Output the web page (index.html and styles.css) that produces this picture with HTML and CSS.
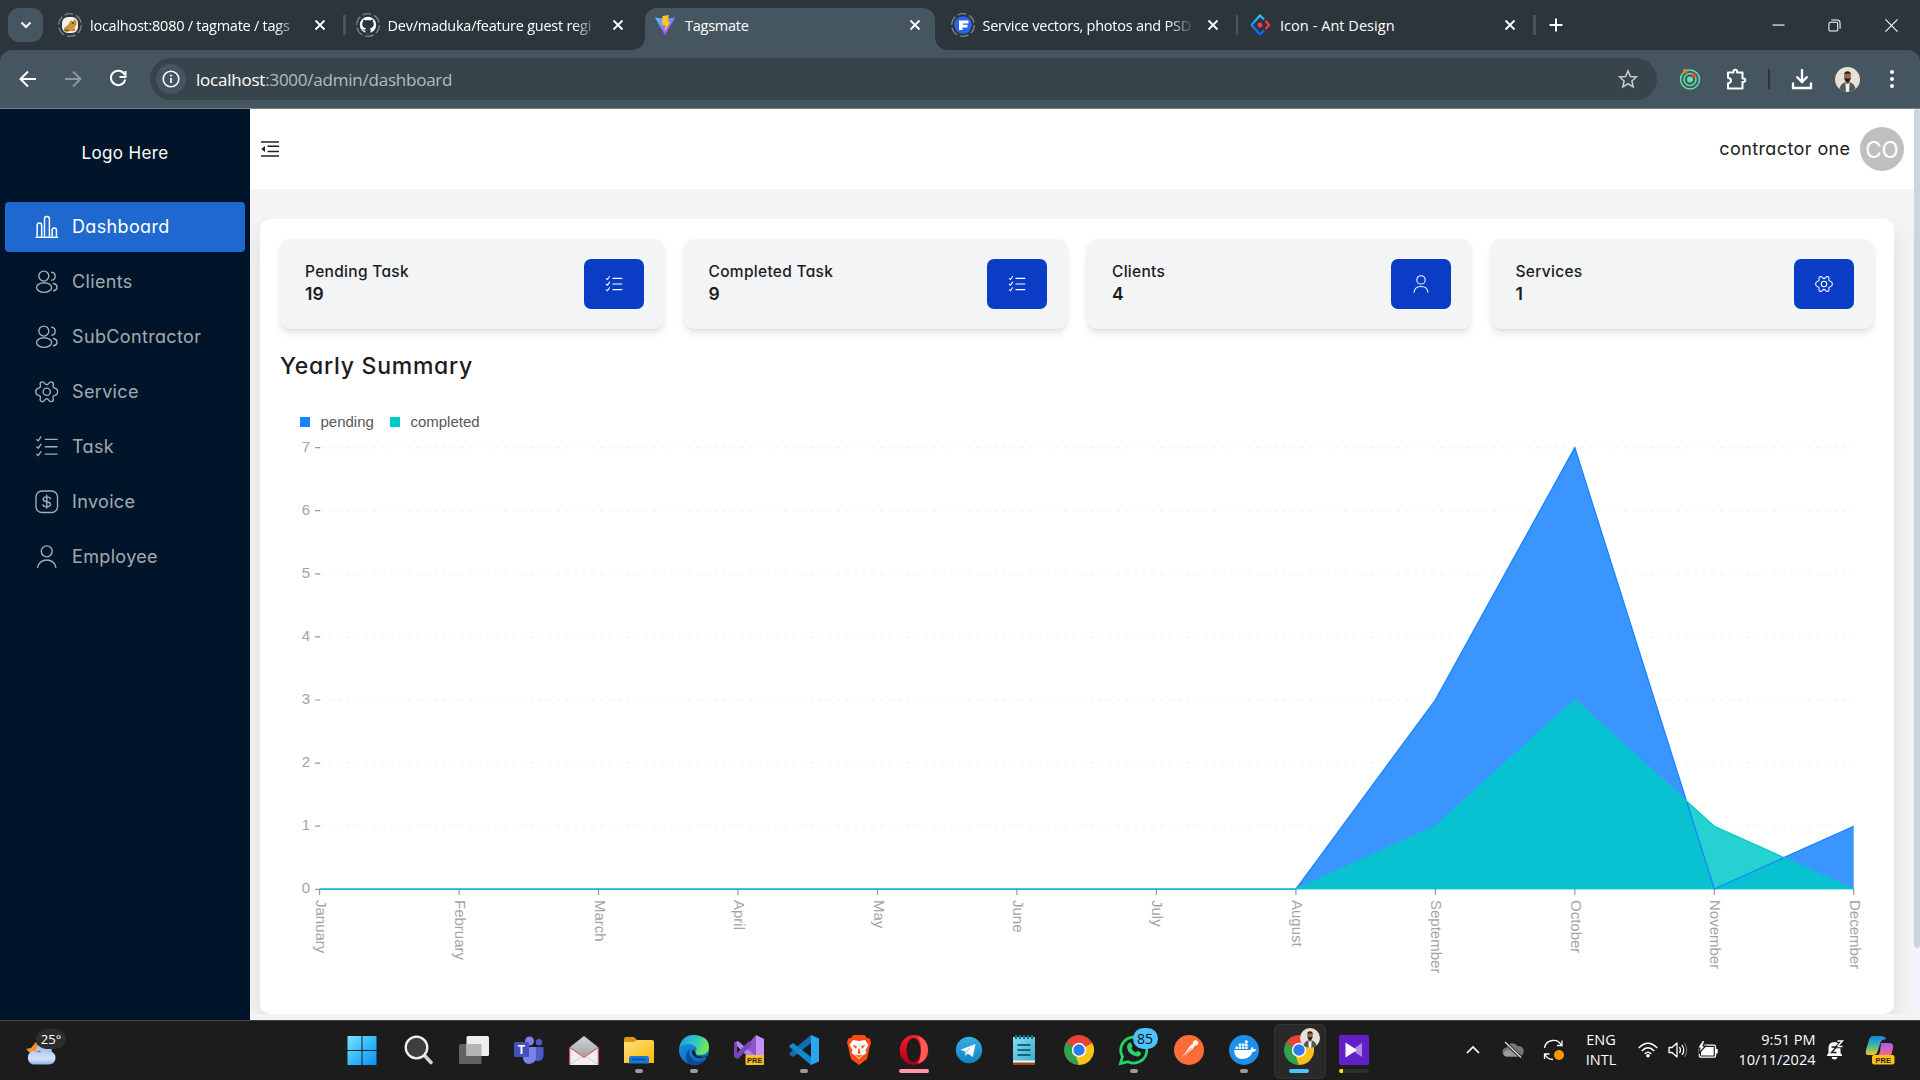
FILE: index.html
```html
<!DOCTYPE html>
<html lang="en">
<head>
<meta charset="utf-8">
<title>Tagsmate</title>
<link rel="stylesheet" href="styles.css">
</head>
<body>
<svg class="defs" aria-hidden="true">
  <defs>
    <linearGradient id="gWin" x1="0" y1="0" x2="1" y2="1"><stop offset="0" stop-color="#7fe0ff"/><stop offset=".5" stop-color="#35bdfb"/><stop offset="1" stop-color="#0a8cf5"/></linearGradient>
    <linearGradient id="gFolder" x1="0" y1="0" x2="1" y2="1"><stop offset="0" stop-color="#ffe07a"/><stop offset="1" stop-color="#fbb90c"/></linearGradient>
    <linearGradient id="gEdgeA" x1="0" y1="0" x2="1" y2=".3"><stop offset="0" stop-color="#1d9be0"/><stop offset=".55" stop-color="#2fc5c9"/><stop offset="1" stop-color="#6be85a"/></linearGradient>
    <linearGradient id="gEdgeB" x1="0" y1="0" x2=".6" y2="1"><stop offset="0" stop-color="#1b9de2"/><stop offset="1" stop-color="#0b62c4"/></linearGradient>
    <linearGradient id="gOpera" x1="0" y1="0" x2="0" y2="1"><stop offset="0" stop-color="#ff1b2d"/><stop offset="1" stop-color="#a70014"/></linearGradient>
    <linearGradient id="gTele" x1="0" y1="0" x2="0" y2="1"><stop offset="0" stop-color="#37aee2"/><stop offset="1" stop-color="#1283c1"/></linearGradient>
    <linearGradient id="gNote" x1="0" y1="0" x2="1" y2="1"><stop offset="0" stop-color="#8adcf0"/><stop offset="1" stop-color="#35aed0"/></linearGradient>
    <linearGradient id="gVite" x1="0" y1="0" x2=".6" y2="1"><stop offset="0" stop-color="#41d1ff"/><stop offset="1" stop-color="#bd34fe"/></linearGradient>
    <linearGradient id="gAnt" x1="0" y1="0" x2="0" y2="1"><stop offset="0" stop-color="#29cdff"/><stop offset=".5" stop-color="#148eff"/><stop offset="1" stop-color="#0a60ff"/></linearGradient>
    <linearGradient id="gCopA" x1="0" y1="0" x2="0" y2="1"><stop offset="0" stop-color="#1a7fe8"/><stop offset=".5" stop-color="#3fb9a0"/><stop offset="1" stop-color="#f2c62a"/></linearGradient>
    <linearGradient id="gCopB" x1="0" y1="0" x2="0" y2="1"><stop offset="0" stop-color="#a25cf0"/><stop offset="1" stop-color="#fb6a80"/></linearGradient>
    <linearGradient id="gCloud" x1="0" y1="0" x2="0" y2="1"><stop offset="0" stop-color="#b4cbf5"/><stop offset=".6" stop-color="#d3e1f8"/><stop offset="1" stop-color="#8fb0e8"/></linearGradient>
    <linearGradient id="gMail" x1="0" y1="0" x2="0" y2="1"><stop offset="0" stop-color="#d6d6d6"/><stop offset="1" stop-color="#8e8e8e"/></linearGradient>
    <clipPath id="cFace"><circle cx="12" cy="12" r="12"/></clipPath>
  </defs>
  <symbol id="x" viewBox="0 0 12 12"><path d="M1.500 1.500l9 9M10.500 1.500l-9 9" fill="none" stroke="#fff" stroke-width="1.800"/></symbol>
  <symbol id="ring" viewBox="0 0 24 24"><circle cx="12" cy="12" r="11.300" fill="none" stroke="#7b868c" stroke-width="1.300" stroke-dasharray="9 2.830"/></symbol>
  <symbol id="users" viewBox="0 0 24 24"><g fill="none" stroke="currentColor" stroke-width="1.400" stroke-linecap="round"><circle cx="9" cy="6.200" r="5.100"/><ellipse cx="9.300" cy="17.900" rx="7.700" ry="4.900"/><path d="M17 2.300c1.800.2 3.600 1.800 3.600 4s-1.800 3.800-3.600 4M18.800 13.800c2 .4 3.700 1.700 3.700 3.700s-1.500 3.200-3.500 3.700"/></g></symbol>
  <symbol id="gear" viewBox="0 0 24 24"><g fill="none" stroke="currentColor" stroke-width="1.400" stroke-linejoin="round"><circle cx="12" cy="12" r="3.700"/><path d="M9.900 3.500Q8.500 1.300 6.500 2.200Q4.700 3 5.400 5Q6.300 7.500 3.700 8.300Q.8 9 .8 12T3.700 15.700Q6.300 16.500 5.400 19Q4.700 21 6.500 21.800Q8.500 22.700 9.900 20.500Q12 17.800 14.100 20.500Q15.500 22.700 17.500 21.800Q19.300 21 18.600 19Q17.700 16.500 20.300 15.700Q23.200 15 23.200 12T20.300 8.300Q17.700 7.500 18.600 5Q19.300 3 17.500 2.200Q15.500 1.300 14.100 3.500Q12 6.200 9.900 3.500Z"/></g></symbol>
  <symbol id="task" viewBox="0 0 24 24"><g fill="none" stroke="currentColor" stroke-width="1.400" stroke-linecap="round"><path d="M10.500 4.500h12M10.500 12h12M10.500 19.500h12M1.800 4.800l1.500 1.200 2.700-4M1.800 12.300l1.500 1.200 2.700-4M1.800 19.800l1.500 1.200 2.700-4"/></g></symbol>
  <symbol id="user" viewBox="0 0 24 24"><g fill="none" stroke="currentColor" stroke-width="1.400" stroke-linecap="round"><circle cx="12" cy="6.500" r="5.600"/><path d="M2.700 23C4 12.800 20 12.800 21.300 23"/></g></symbol>
  <symbol id="chrome" viewBox="0 0 30 30"><path d="M15 15L2.010 7.500A15 15 0 0 1 27.990 7.500Z" fill="#ea4335"/><path d="M15 15L28 7.500A15 15 0 0 1 15 30Z" fill="#fbc116"/><path d="M15 15V30A15 15 0 0 1 2.010 7.500Z" fill="#34a04a"/><path d="M15 8H28.300L15 15ZM9 11.500L2.010 7.500 15 15Z" fill="#ea4335"/><path d="M21 18.500L15 30 12 22Z" fill="#fbc116"/><path d="M2.010 7.500L9 18.500 15 15Z" fill="#34a04a"/><circle cx="15" cy="15" r="7.200" fill="#fff"/><circle cx="15" cy="15" r="5.700" fill="#2f78ee"/></symbol>
  <symbol id="face" viewBox="0 0 24 24"><g clip-path="url(#cFace)"><path fill="#e6e0d6" d="M0 0h24v24H0z"/><path d="M4 24q0-9 8-9.500 8 .5 8 9.500z" fill="#515a50"/><path d="M10 15h4l-.5 9h-3z" fill="#eef0f4"/><path d="M10 12h4v3l-2 1.500-2-1.500z" fill="#8a5c44"/><ellipse cx="12" cy="9" rx="3.300" ry="4.500" fill="#99694e"/><path d="M8.700 8q0-4 3.300-4t3.300 4l-.8-1.500h-5zM9 10.500q3 1 6 0-.5 3.800-3 3.800t-3-3.800z" fill="#2a211e"/></g></symbol>
</svg>

<header class="browser">
  <div class="tabs">
    <button class="tab-menu"><svg width="12" height="8" viewBox="0 0 12 8"><path d="M1.500 1.500L6 6l4.500-4.500" fill="none" stroke="#fff" stroke-width="2"/></svg></button>
    <div class="tab">
      <svg class="favicon" viewBox="0 0 24 24"><use href="#ring"/><rect x="4" y="4" width="16" height="16" rx="6" fill="#f4f1ea"/><path d="M6 18q-1-4 4-6l3-5 1.500 1.500L17 6l1.500 2.500q1 4-2 5.500l1 4z" fill="#c9943c"/><path d="M6.500 17l3-1 2 2.500h-5z" fill="#7c5a25"/><circle cx="15" cy="10" r=".9" fill="#333"/></svg>
      <span class="tab-title fade">localhost:8080 / tagmate / tags</span><svg class="close"><use href="#x"/></svg>
    </div>
    <i class="sep on"></i>
    <div class="tab">
      <svg class="favicon" viewBox="0 0 24 24"><use href="#ring"/><circle cx="12" cy="12" r="8.200" fill="#fff"/><path d="M9.400 20v-2.500c-2 .4-2.700-.9-3.200-1.600 1.400-.1 1.500 1.200 3.200.7.100-.6.300-1 .6-1.300-2.500-.4-3.800-1.500-3.800-4 0-1 .4-1.900 1-2.500-.2-.7-.2-1.500.1-2.300.9 0 1.600.4 2.300.9a9 9 0 0 1 4.800 0c.7-.5 1.400-.9 2.300-.9.300.8.300 1.600.1 2.300.6.600 1 1.500 1 2.500 0 2.500-1.300 3.600-3.800 4 .4.400.6 1 .6 1.700v3z" fill="#2b353b"/></svg>
      <span class="tab-title fade">Dev/maduka/feature guest regi</span><svg class="close"><use href="#x"/></svg>
    </div>
    <i class="sep"></i>
    <div class="tab active">
      <svg class="favicon" viewBox="0 0 24 24"><path d="M2 4.500l10 1.500 10-1.500-10 18z" fill="url(#gVite)"/><path d="M9.500 3l6.500-1-1.500 6.500h3L11.500 19l1-7H9z" fill="#ffc61b"/></svg>
      <span class="tab-title">Tagsmate</span><svg class="close"><use href="#x"/></svg>
    </div>
    <i class="sep"></i>
    <div class="tab">
      <svg class="favicon" viewBox="0 0 24 24"><use href="#ring"/><circle cx="12" cy="12" r="8.800" fill="#2c63ea"/><path d="M8 17V7.500h9.500v3H12v1.200h4.500v2.800H11.500V17z" fill="#fff"/></svg>
      <span class="tab-title fade tight">Service vectors, photos and PSD</span><svg class="close"><use href="#x"/></svg>
    </div>
    <i class="sep on"></i>
    <div class="tab">
      <svg class="favicon" viewBox="0 0 24 24"><path d="M16 6.500l-4-4L3.500 12l8.500 9.500 4-4" fill="none" stroke="url(#gAnt)" stroke-width="2.200" stroke-linejoin="round"/><path d="M18 8.500l3.200 3.500-3.200 3.500" fill="none" stroke="#f5384f" stroke-width="2.200" stroke-linecap="round" stroke-linejoin="round"/><circle cx="12" cy="12" r="2.500" fill="#f5384f"/></svg>
      <span class="tab-title wide">Icon - Ant Design</span><svg class="close"><use href="#x"/></svg>
    </div>
    <i class="sep on"></i>
    <svg class="plus" viewBox="0 0 14 14"><path d="M7 .5v13M.5 7h13" stroke="#fff" stroke-width="2"/></svg>
    <div class="win-controls">
      <svg viewBox="0 0 14 14"><path d="M.5 6.500h13" stroke="#fff" stroke-width="1.200"/></svg>
      <svg viewBox="0 0 14 14"><path d="M1 5q0-1.500 1.500-1.500h6.500q1.500 0 1.500 1.500v6.500q0 1.500-1.500 1.500h-6.500Q1 13 1 11.500zM3.500 1h6q3.500 0 3.500 3.500v6" fill="none" stroke="#fff" stroke-width="1.100"/></svg>
      <svg viewBox="0 0 14 14"><path d="M.5.5l13 13M13.500.5l-13 13" stroke="#fff" stroke-width="1.200"/></svg>
    </div>
  </div>

  <div class="toolbar">
    <svg class="nav" viewBox="0 0 18 18"><path d="M17 9H2M9 1.500L1.500 9 9 16.500" fill="none" stroke="#fff" stroke-width="2"/></svg>
    <svg class="nav" viewBox="0 0 18 18"><path d="M1 9h15M9 1.500L16.500 9 9 16.500" fill="none" stroke="#8b979d" stroke-width="2"/></svg>
    <svg class="nav" viewBox="0 0 18 18"><path d="M15.500 4.500A7.200 7.200 0 1 0 16.200 9.500" fill="none" stroke="#fff" stroke-width="2"/><path d="M16.500 1v6h-6" fill="none" stroke="#fff" stroke-width="2"/></svg>
    <div class="omnibox">
      <span class="info"><svg width="18" height="18" viewBox="0 0 18 18"><circle cx="9" cy="9" r="7.800" fill="none" stroke="#fff" stroke-width="1.600"/><path d="M9 8v5M9 4.800v1.800" stroke="#fff" stroke-width="1.700"/></svg></span>
      <span class="url"><b>localhost</b>:3000/admin/dashboard</span>
      <svg class="star" viewBox="0 0 20 20"><path d="M10 2l2.400 5.500 6 .5-4.500 4 1.300 5.900L10 14.800 4.800 17.900l1.300-5.900L1.600 8l6-.5z" fill="none" stroke="#c4cace" stroke-width="1.600"/></svg>
    </div>
    <div class="actions">
      <svg class="ext" viewBox="0 0 22 22"><g fill="none" stroke="#5fe3a5" stroke-width="1.500"><circle cx="11" cy="11.500" r="9.500"/><circle cx="11" cy="11.500" r="6"/></g><circle cx="11" cy="11.500" r="3" fill="#5fe3a5"/><circle cx="6" cy="3" r="2.200" fill="#f57a1f"/><circle cx="15" cy="7.500" r="2.200" fill="#f0472a"/></svg>
      <svg class="puzzle" viewBox="0 0 22 22"><path d="M3 4.500h5.500v-1a1.800 1.800 0 0 1 3.600 0v1H17.500v6h1a1.800 1.800 0 0 1 0 3.600h-1V20.500H3v-5.200q3-.5 3-2.800T3 9.700z" fill="none" stroke="#fff" stroke-width="2" stroke-linejoin="round"/></svg>
      <i class="bar"></i>
      <svg class="download" viewBox="0 0 22 22"><path d="M11 1v13M5.500 8.500L11 14l5.500-5.500M2 14.500v5.500h18v-5.500" fill="none" stroke="#fff" stroke-width="2.300"/></svg>
      <svg class="profile"><use href="#face"/></svg>
      <svg class="dots" viewBox="0 0 6 20"><g fill="#fff"><circle cx="3" cy="3" r="2"/><circle cx="3" cy="10" r="2"/><circle cx="3" cy="17" r="2"/></g></svg>
    </div>
  </div>
</header>

<div class="app">
  <aside class="sidebar">
    <div class="logo">Logo Here</div>
    <nav class="menu">
      <a class="active"><svg viewBox="0 0 24 24"><g fill="none" stroke="currentColor" stroke-width="1.500"><path d="M.5 22.700h23"/><path d="M2.200 22V10.500q0-2.300 2.300-2.300t2.300 2.300V22M9.700 22V4q0-2.500 2.500-2.500T14.700 4V22M17.500 22v-6.500q0-2.200 2.200-2.200t2.200 2.200V22"/></g></svg><span>Dashboard</span></a>
      <a><svg><use href="#users"/></svg><span>Clients</span></a>
      <a><svg><use href="#users"/></svg><span>SubContractor</span></a>
      <a><svg><use href="#gear"/></svg><span>Service</span></a>
      <a><svg><use href="#task"/></svg><span>Task</span></a>
      <a><svg viewBox="0 0 24 24"><g fill="none" stroke="currentColor" stroke-width="1.400" stroke-linecap="round"><rect x="1" y="1" width="22" height="22" rx="6"/><path d="M15.800 9Q15.500 7 12 7T8.300 9.500Q8.300 11.500 12 12T15.800 14.500Q15.800 17 12 17T8.200 15M12 5.300v13.400"/></g></svg><span>Invoice</span></a>
      <a><svg><use href="#user"/></svg><span>Employee</span></a>
    </nav>
  </aside>

  <div class="main">
    <div class="topbar">
      <svg class="fold" viewBox="0 0 18 16"><path d="M0 1h18M6.500 5.300H18M6.500 10.500H18M0 15h18" stroke="#222" stroke-width="1.500"/><path d="M4 5v6L.3 8z" fill="#222"/></svg>
      <span class="who">contractor one</span>
      <span class="avatar">CO</span>
    </div>
    <main class="panel">
      <section class="stats">
        <article><div><h3>Pending Task</h3><p>19</p></div><span class="badge"><svg><use href="#task"/></svg></span></article>
        <article><div><h3>Completed Task</h3><p>9</p></div><span class="badge"><svg><use href="#task"/></svg></span></article>
        <article><div><h3>Clients</h3><p>4</p></div><span class="badge"><svg><use href="#user"/></svg></span></article>
        <article><div><h3>Services</h3><p>1</p></div><span class="badge"><svg><use href="#gear"/></svg></span></article>
      </section>
      <h2>Yearly Summary</h2>
      <div class="legend"><i class="pending"></i><span>pending</span><i class="completed"></i><span>completed</span></div>
      <svg class="chart" viewBox="280 435 1594 559">
        <g class="grid">
          <path d="M320 447.600H1854M320 510.700H1854M320 573.800H1854M320 636.900H1854M320 700H1854M320 763.100H1854M320 826.200H1854"/>
        </g>
        <path class="ticks" d="M315 447.600h5M315 510.700h5M315 573.800h5M315 636.900h5M315 700h5M315 763.100h5M315 826.200h5M315 889.300h5M319.600 889v6M459.100 889v6M598.500 889v6M738 889v6M877.500 889v6M1016.900 889v6M1156.400 889v6M1295.900 889v6M1435.300 889v6M1574.800 889v6M1714.300 889v6M1853.700 889v6"/>
        <path class="area pending" d="M319.600 889.300H1295.900L1435.300 700 1574.800 447.600 1714.300 889.300 1853.700 826.200V889.300Z"/>
        <path class="area completed" d="M319.600 889.300H1295.900L1435.300 826.200 1574.800 700 1714.300 826.200 1853.700 889.300Z"/>
        <path class="line pending" d="M319.600 889H1295.900L1435.300 700 1574.800 447.600 1714.300 889 1853.700 826.200"/>
        <path class="line completed" d="M319.600 889H1295.900L1435.300 826.200 1574.800 700 1714.300 826.200 1853.700 889"/>
        <g class="ylabels">
          <text x="310" y="452">7</text><text x="310" y="515">6</text><text x="310" y="578">5</text><text x="310" y="641">4</text><text x="310" y="704">3</text><text x="310" y="767">2</text><text x="310" y="830">1</text><text x="310" y="893">0</text>
        </g>
        <g class="xlabels">
          <text transform="translate(315.600 900) rotate(90)">January</text>
          <text transform="translate(455.100 900) rotate(90)">February</text>
          <text transform="translate(594.500 900) rotate(90)">March</text>
          <text transform="translate(734 900) rotate(90)">April</text>
          <text transform="translate(873.500 900) rotate(90)">May</text>
          <text transform="translate(1012.900 900) rotate(90)">June</text>
          <text transform="translate(1152.400 900) rotate(90)">July</text>
          <text transform="translate(1291.900 900) rotate(90)">August</text>
          <text transform="translate(1431.300 900) rotate(90)">September</text>
          <text transform="translate(1570.800 900) rotate(90)">October</text>
          <text transform="translate(1710.300 900) rotate(90)">November</text>
          <text transform="translate(1849.700 900) rotate(90)">December</text>
        </g>
      </svg>
    </main>
  </div>
  <div class="scrollbar"><i></i></div>
</div>

<footer class="taskbar">
  <div class="weather">
    <svg width="32" height="26" viewBox="0 0 32 26"><path d="M1 10l5-1 5-6 4 8-6 7z" fill="#f0922e"/><path d="M11 12Q12 3 20 4q7 1 7 9z" fill="#a9c4f3"/><path d="M8 25.500a7 7 0 0 1 0-13.500q3-.5 5 1.500 4-2.500 8-1.500 10 0 9.500 7-.5 6-7 6.500z" fill="url(#gCloud)"/></svg>
    <span>25°</span>
  </div>
  <div class="apps">
    <div class="start"><svg viewBox="0 0 30 30"><path d="M.5 1h14v14H.5zM15.500 1h14v14h-14zM.5 16h14v14H.5zM15.500 16h14v14h-14z" fill="url(#gWin)"/></svg></div>
    <div><svg viewBox="0 0 30 30"><path d="M20 20l7 7.500" stroke="#d4d7da" stroke-width="3.600" stroke-linecap="round"/><circle cx="12.500" cy="12.500" r="10.800" fill="#3e3e3f" stroke="#eef0f1" stroke-width="2.300"/></svg></div>
    <div><svg viewBox="0 0 30 30"><rect x="0" y="9" width="22.500" height="20" rx="1.500" fill="#626262"/><rect x="7.500" y="1" width="22.500" height="20" rx="1.500" fill="#eee"/><path d="M7.500 9h15v12h-13.500q-1.500 0-1.500-1.500z" fill="#b4b4b4"/></svg></div>
    <div><svg viewBox="0 0 30 30"><circle cx="15.500" cy="6" r="4.500" fill="#7b83eb"/><circle cx="25" cy="7.300" r="3.200" fill="#5059c9"/><path d="M20 12h9.500v8q0 6-6 6-3 0-3.500-1z" fill="#5059c9"/><path d="M9 12h13v9.500q0 7-7 7.500-6 0-6-7z" fill="#7b83eb"/><rect y="7" width="15" height="15" rx="1.500" fill="#474fbb"/><text x="7.500" y="18.500" class="t-letter">T</text></svg></div>
    <div><svg viewBox="0 0 30 30"><path d="M1 12L15 1l14 11v18H1z" fill="url(#gMail)"/><path d="M.5 12.500L15 22l14.500-9.500V30H.5z" fill="#efefef"/><path d="M.8 30V12.500L15 22.500l14.200-10V30" fill="none" stroke="#e04a50" stroke-width="1"/><path d="M2 29l10-7M28 29l-10-7" stroke="#ccc"/></svg></div>
    <div class="run"><svg viewBox="0 0 30 30"><path d="M0 4q0-2 2-2h8l3 3v5H0z" fill="#dc9a0a"/><path d="M0 7h10l3-2h15q2 0 2 2v21H0z" fill="url(#gFolder)"/><path d="M5 28.500V23q0-2 2-2h16q2 0 2 2v5.500z" fill="#1478d4"/><path d="M9 24.500h12" stroke="#0a4a94" stroke-width="1.400" stroke-linecap="round"/></svg></div>
    <div class="run"><svg viewBox="0 0 30 30"><circle cx="15" cy="15" r="15" fill="url(#gEdgeB)"/><path d="M.5 12Q3 0 15 0q15 1 15 12 0 8-9 8-6 0-4-3 2-5-3-7-7-3-13.500 2z" fill="url(#gEdgeA)"/><path d="M11 14q-3 8 5 12 6 2 11-2-5 7-13 6-8-2-7-9 1-5 4-7z" fill="#0c4a97"/><path d="M14 14q-3 6 3.500 8.500 5 1.500 10-1.500l2.500 3-4-2-8-1z" fill="#1c1c1c"/></svg></div>
    <div><svg viewBox="0 0 30 30"><path d="M22 0l8 4v22l-8 4z" fill="#c78ff8"/><path d="M22 0v30L14 22 14 9z" fill="#8a55cf"/><path d="M0 8l4-2 20 17-4 5z" fill="#b083ea"/><path d="M0 8v14l4 2 14-15-3-3-12 12V8z" fill="#7546b5"/><rect x="11.500" y="20" width="18.500" height="10" rx="1" fill="#fcbf1e"/><text x="20.800" y="28" class="pre">PRE</text></svg></div>
    <div class="run"><svg viewBox="0 0 30 30"><path d="M22 0v8L4 22l-3.500-2.500V18z" fill="#0f6fb0"/><path d="M.5 12v-1.500L4 8l18 14v8z" fill="#1389d0"/><path d="M22 0l8 3.500v23L22 30z" fill="#2aa6f2"/></svg></div>
    <div><svg viewBox="0 0 30 30"><path d="M9.500 0h11l2.500 3 3 .5 1 4.500-1 3-3 13-8 6-8-6L4 11 3 8l1-4.500L7 3z" fill="#fb4a14"/><path d="M9 5l6 1 6-1 3.500 5-3 5 1 3-4.500 3-3 3-3-3-4.500-3 1-3-3-5z" fill="#fff"/><path d="M8.500 10l4.500 1-1 3zM21.500 10L17 11l1 3zM15 12l-1.500 6 1.500 1 1.500-1zM11 19l4 1.500 4-1.500-4 4z" fill="#fb4a14"/></svg></div>
    <div class="run wide"><svg viewBox="0 0 30 30"><ellipse cx="15" cy="15" rx="14.300" ry="15" fill="url(#gOpera)"/><path d="M18 1q11 3 11 14t-11 14q4-4 4-14t-4-14z" fill="#ff5a56"/><ellipse cx="14.500" cy="15" rx="7" ry="12" fill="#1c1c1c"/></svg></div>
    <div><svg viewBox="0 0 30 30"><circle cx="15" cy="15" r="13.200" fill="url(#gTele)"/><path d="M6.500 14.800L21.500 9l-2.700 13-5-3.500-2.500 2.300-.5-4.500z" fill="#fff"/><path d="M10.800 16.300l7.500-5-5.500 6.500-1.500 3z" fill="#b9d8ea"/></svg></div>
    <div><svg viewBox="0 0 30 30"><path d="M4 2h22v25H4z" fill="url(#gNote)"/><path d="M4 27h22v3H4z" fill="#9a4c18"/><path d="M4 25.500h22v2H4z" fill="#f4f4f4"/><path d="M8.500 10h13M8.500 15h13M8.500 20h13" stroke="#17657f" stroke-width="1.800"/><path d="M7 0v4M11 0v4M15 0v4M19 0v4M23 0v4" stroke="#1c6f8c" stroke-width="2"/></svg></div>
    <div><svg><use href="#chrome"/></svg></div>
    <div class="run whats"><svg viewBox="0 0 30 30"><path d="M1.500 28.500l2-7A13 13 0 1 1 9 26.700z" fill="none" stroke="#25d366" stroke-width="2.800"/><path d="M9.500 8.500q2-2 3 .5l1 2.500-1.200 1.800q1.700 3.200 4.700 4.200l1.500-1.700 3.500 1.700q0 4-4 4-9-1.500-10-9.500-.2-2 1.500-3.500z" fill="#25d366"/></svg><em>85</em></div>
    <div><svg viewBox="0 0 30 30"><circle cx="15" cy="15" r="15" fill="#ff6c37"/><path d="M7 24l9-13 3 2.500z" fill="#fff"/><path d="M15.500 11.500l4-3.500 2 2-3.500 4.500z" fill="#fff"/><circle cx="21.500" cy="7.800" r="2.600" fill="#fff"/><path d="M8.500 22.500l9-9.500" stroke="#ff6c37"/></svg></div>
    <div class="run"><svg viewBox="0 0 30 30"><circle cx="15" cy="15" r="15" fill="#1d8fe8"/><path d="M5 15h16.500l1.500-3.500 1.500 2.500 3 .5q-1 2-4 2.500-2.500 7-10 7-8 0-8.500-9z" fill="#fff"/><path d="M6.500 11.500h2.500V14H6.500zM9.700 11.500h2.500V14H9.700zM12.900 11.500h2.500V14h-2.500zM16.100 11.500h2.500V14h-2.500zM9.700 8.500h2.500V11H9.700zM12.900 8.500h2.500V11h-2.500zM16.100 8.500h2.500V11h-2.500zM16.100 5.500h2.500V8h-2.500z" fill="#fff"/></svg></div>
    <div class="run current"><svg><use href="#chrome"/></svg><svg class="mini"><use href="#face"/></svg></div>
    <div class="run media"><svg viewBox="0 0 30 30"><rect width="30" height="30" rx="1.500" fill="#6420c8"/><path d="M23 8v14l-10-7z" fill="#b28ae8"/><path d="M6.500 7.500L18 15 6.500 22.500z" fill="#fff"/></svg></div>
  </div>
  <div class="tray">
    <svg class="chev" viewBox="0 0 14 8"><path d="M1 7l6-6 6 6" fill="none" stroke="#fff" stroke-width="1.700"/></svg>
    <svg class="cloud" viewBox="0 0 22 18"><path d="M5 15.500a4.500 4.500 0 0 1-.3-9A6 6 0 0 1 15.500 5a5 5 0 0 1 2 10.500z" fill="#767676"/><path d="M4 15.500q-3-1-2-4 1-2.500 5-2.500l9 6.500z" fill="#9a9a9a"/><path d="M3 1l16 15.500" stroke="#1c1c1c" stroke-width="3"/><path d="M3 1l16 15.500" stroke="#e8e8e8" stroke-width="1.200"/></svg>
    <svg class="sync" viewBox="0 0 22 22"><path d="M1.500 9a9 9 0 0 1 17-2.500M19 1.500v5h-5M1.500 20v-5h5M2 15.500a9 9 0 0 0 8 5" fill="none" stroke="#fff" stroke-width="1.300"/><circle cx="16" cy="16" r="5" fill="#ff9800"/></svg>
    <div class="lang"><span>ENG</span><span>INTL</span></div>
    <svg class="wifi" viewBox="0 0 20 16"><g fill="none" stroke="#fff" stroke-width="1.500"><path d="M.8 6Q10-3.500 19.200 6M3.800 9q6.200-6.500 12.400 0M6.800 12q3.200-3.300 6.400 0"/></g><circle cx="10" cy="13.800" r="1.800" fill="#fff"/></svg>
    <svg class="vol" viewBox="0 0 20 18"><path d="M1 6.500h3l5-4.500v14l-5-4.500H1z" fill="none" stroke="#fff" stroke-width="1.300" stroke-linejoin="round"/><path d="M11.500 6q2 3 0 6M14 4q3.500 5 0 10" fill="none" stroke="#fff" stroke-width="1.300"/><path d="M16.500 2q4.500 7 0 14" fill="none" stroke="#666" stroke-width="1.300"/></svg>
    <svg class="bat" viewBox="0 0 20 18"><path d="M4 4.200h12q1.500 0 1.500 1.500V15q0 1.200-1.500 1.200H3q-1.700 0-1.700-1.700V8z" fill="none" stroke="#fff" stroke-width="1.300"/><path d="M5 6h10.700v8.500H3V10z" fill="#fff"/><path d="M18 8h1.700v4.500H18z" fill="#fff"/><path d="M4.500-.5L-.5 7H2l-1 5.500L7.500 5H5L7-.5z" fill="#fff" stroke="#1c1c1c" stroke-width="1.200"/></svg>
    <div class="clock"><span>9:51 PM</span><span>10/11/2024</span></div>
    <svg class="bell" viewBox="0 0 18 20"><path d="M1 16v-1l1.500-2V8q0-6 6-6 6 0 6 6v5l1.500 2v1zM5.500 17h6q-.5 2.500-3 2.500t-3-2.500z" fill="#fff"/><path d="M11 1h6l-5.500 5.500H17" fill="none" stroke="#1c1c1c" stroke-width="3.500"/><path d="M11.500 1h5l-5 5.500h5" fill="none" stroke="#fff" stroke-width="1.400"/><path d="M5.500 7h5l-5 5.500h5" fill="none" stroke="#1c1c1c" stroke-width="1.400"/></svg>
    <svg class="copilot" viewBox="0 0 30 30"><path d="M8 1h8q4 0 5 3l-3 1q-2 0-3 4l-3 9q-1 2-4 2H3q-3 0-2-5L4 5q1-4 4-4z" fill="url(#gCopA)"/><path d="M16 8h8q5 0 4 5l-2 8H12q2-1 3-4z" fill="url(#gCopB)"/><rect x="7" y="20" width="22.500" height="9.500" rx="2" fill="#fdc016"/><text x="18.300" y="27.800" class="pre">PRE</text></svg>
  </div>
</footer>
</body>
</html>
```
FILE: styles.css
```css
* { box-sizing: border-box; margin: 0; padding: 0; }
body { width: 1920px; height: 1080px; overflow: hidden; display: flex; flex-direction: column; font-family: Inter, sans-serif; font-feature-settings: "cv11"; color: #1c1c1c; }
svg { display: block; flex: none; overflow: visible; }
.defs { position: absolute; width: 0; height: 0; }

/* browser chrome */
.browser { height: 109px; background: #2b353b; font-family: "Open Sans", sans-serif; }
.tabs { height: 50px; display: flex; align-items: center; padding-left: 8px; }
.tab-menu { width: 35px; height: 34px; border: 0; border-radius: 11px; background: #455660; display: flex; align-items: center; justify-content: center; margin-right: 7px; }
.tab { position: relative; flex: none; width: 290px; height: 42px; margin-top: 8px; padding: 0 14px 8px 8px; display: flex; align-items: center; gap: 8px; }
.tab.active { background: #455660; border-radius: 12px 12px 0 0; }
.tab.active::before, .tab.active::after { content: ""; position: absolute; bottom: 0; width: 12px; height: 12px; }
.tab.active::before { left: -12px; background: radial-gradient(circle at 0 0, transparent 11.5px, #455660 12px); }
.tab.active::after { right: -12px; background: radial-gradient(circle at 100% 0, transparent 11.5px, #455660 12px); }
.favicon { width: 24px; height: 24px; }
.tab-title { flex: none; width: 210px; white-space: nowrap; font-size: 14.5px; line-height: 22px; padding-top: 1px; letter-spacing: -0.25px; color: #fff; }
.tab-title.tight { letter-spacing: -0.25px; }
.tab-title.wide { letter-spacing: 0.05px; }
.fade { -webkit-mask-image: linear-gradient(90deg, #000 185px, transparent 212px); mask-image: linear-gradient(90deg, #000 185px, transparent 212px); }
.close { width: 12px; height: 12px; margin-left: 6px; }
.sep { flex: none; width: 7.5px; height: 20px; padding-left: 3px; background-clip: content-box; }
.sep.on { border-right: 2.5px solid transparent; background-color: #455660; }
.plus { width: 14px; height: 14px; margin-left: 11px; }
.win-controls { flex: 1; display: flex; justify-content: flex-end; gap: 43.500px; padding-right: 22.500px; }
.win-controls svg { width: 13px; height: 13px; }
.toolbar { height: 59px; background: #455660; border-bottom: 1px solid #73818a; border-radius: 12px 12px 0 0; display: flex; align-items: center; padding-left: 18.500px; }
.nav { width: 18px; height: 18px; margin-right: 27px; }
.omnibox { flex: none; width: 1507px; height: 42px; margin-left: -3.500px; border-radius: 21px; background: #38444b; display: flex; align-items: center; padding: 0 19px 0 6px; }
.info { width: 30px; height: 30px; border-radius: 50%; background: #455660; display: flex; align-items: center; justify-content: center; }
.url { flex: 1; margin-left: 10px; font-size: 17px; letter-spacing: -0.23px; color: #b3bcc1; }
.url b { font-weight: 400; color: #fff; }
.star { width: 20px; height: 20px; }
.actions { flex: 1; display: flex; align-items: center; padding-left: 22px; }
.ext, .puzzle, .download { width: 22px; height: 22px; }
.ext { margin-right: 24px; }
.puzzle { margin-right: 21px; }
.bar { width: 2px; height: 20px; background: #2b353b; margin-right: 21px; }
.download { margin-right: 22px; }
.profile { width: 25px; height: 25px; margin-right: 29px; }
.dots { width: 6px; height: 20px; }

/* application */
.app { height: 911px; display: flex; background: #f4f4f4; }
.sidebar { width: 250px; background: #001529; }
.logo { height: 88px; line-height: 88px; text-align: center; color: #fff; font-size: 17px; letter-spacing: .35px; }
.menu { display: flex; flex-direction: column; gap: 5px; padding: 5px; }
.menu a { height: 50px; border-radius: 4px; display: flex; align-items: center; gap: 13.500px; padding: 0 0 1px 30px; color: rgba(255,255,255,.65); font-size: 18px; letter-spacing: .35px; }
.menu a.active { background: #1f68cf; color: #fff; }
.menu svg { width: 23.500px; height: 23.500px; }
.main { width: 1664px; display: flex; flex-direction: column; }
.topbar { height: 80px; background: #fff; display: flex; align-items: center; padding: 0 10px 0 11px; }
.fold { width: 18px; height: 16px; }
.who { margin-left: auto; margin-right: 9.500px; padding-bottom: 1px; font-size: 18px; letter-spacing: .4px; }
.avatar { width: 44px; height: 44px; border-radius: 50%; background: #bfbfbf; color: #fff; font-size: 22.500px; display: flex; align-items: center; justify-content: center; }
.panel { width: 1634px; height: 795px; margin: 30px 0 0 10px; padding: 20px; border-radius: 10px; background: #fff; box-shadow: 0 12px 25px rgba(0,0,0,.1); clip-path: inset(0 -20px 0 -10px); }
.stats { display: grid; grid-template-columns: repeat(4, 1fr); gap: 20px; }
.stats article { height: 90px; padding: 0 20px 0 25px; display: flex; align-items: center; justify-content: space-between; border-radius: 10px; background: #f3f4f6; box-shadow: 0 5px 8px -1px rgba(0,0,0,.1), 0 2px 5px -2px rgba(0,0,0,.1); }
.stats article div { padding-bottom: 2px; }
.stats h3 { font-size: 15.500px; line-height: 22px; font-weight: 500; letter-spacing: .3px; }
.stats p { font-size: 17.500px; line-height: 22px; font-weight: 600; }
.badge { width: 60px; height: 50px; border-radius: 7px; background: #0a3cc6; color: #fff; display: flex; align-items: center; justify-content: center; }
.badge svg { width: 18px; height: 18px; }
h2 { height: 81px; line-height: 75px; font-size: 23px; font-weight: 550; letter-spacing: .75px; }
.legend { height: 25px; display: flex; align-items: center; padding: 0 0 1px 20px; font: 15px "Liberation Sans", sans-serif; color: #55585c; }
.legend span { padding-bottom: 1px; }
.legend i { width: 10px; height: 10px; margin-right: 10.500px; }
.legend i.pending { background: #1783ff; }
.legend i.completed { background: #00c9c9; }
.legend span + i { margin-left: 16px; }
.chart { width: 1594px; height: 559px; font: 15px "Liberation Sans", sans-serif; }
.grid path { fill: none; stroke: #f2f2f3; stroke-width: 1.200; stroke-dasharray: 3.750 5; }
.ticks { fill: none; stroke: #999; stroke-width: 1.200; }
.area { opacity: .85; }
.area.pending { fill: #1783ff; }
.area.completed { fill: #00c9c9; }
.line { fill: none; stroke-width: 1.250; }
.line.pending { stroke: #1783ff; }
.line.completed { stroke: #00c9c9; }
.ylabels text { text-anchor: end; fill: #a3a3a3; }
.xlabels text { fill: #a3a3a3; }
.scrollbar { width: 6px; background: #f1f5f9; }
.scrollbar i { display: block; height: 839px; border-radius: 3px; background: #cbd5e1; }

/* taskbar */
.taskbar { height: 60px; background: #1c1c1c; border-top: 1px solid #444; display: flex; align-items: center; color: #fff; font-family: "Open Sans", sans-serif; }
.weather { flex: none; width: 334.500px; height: 43px; padding-left: 25px; display: flex; align-items: flex-end; }
.weather span { align-self: flex-start; position: relative; margin-left: -21px; width: 30px; height: 20px; border-radius: 10px; background: #2d2d2d; font-size: 13px; line-height: 20px; text-align: center; }
.weather svg { margin-bottom: 7px; }
.apps { display: flex; padding-bottom: 2px; }
.apps div { position: relative; width: 55px; height: 57px; display: flex; align-items: center; justify-content: center; }
.apps .start { margin-right: 2px; }
.apps svg { width: 30px; height: 30px; }
.run::after { content: ""; position: absolute; bottom: 5px; width: 8px; height: 4px; border-radius: 2px; background: #9b9b9b; }
.run.wide::after { width: 30px; background: #ff98a3; }
.run.current::before { content: ""; position: absolute; left: 2px; top: 3px; width: 50px; height: 53px; border-radius: 5px; background: #292929; border: 1px solid #343434; }
.run.current svg { position: relative; }
.run.current::after { width: 20px; background: #4cc2ff; }
.apps .run.current .mini { position: absolute; width: 20px; height: 20px; left: 28px; top: 7px; }
.run.media::after { width: 30px; background: linear-gradient(90deg, #fce100 4px, #2c2c2c 4px); }
.whats em { position: absolute; left: 26px; top: 7px; width: 25px; height: 21px; border-radius: 11px; background: #4cc2ff; color: #111; font: 14px/21px "Open Sans", sans-serif; text-align: center; }
.t-letter { font: bold 12px "Liberation Sans", sans-serif; fill: #fff; text-anchor: middle; }
.pre { font: bold 7.500px "Liberation Sans", sans-serif; fill: #222; text-anchor: middle; }
.tray { display: flex; align-items: center; margin-left: 84px; padding-bottom: 2px; font-size: 14.500px; line-height: 20px; }
.tray span { display: block; }
.chev { width: 14px; height: 8px; margin: 0 22px 0 0; }
.cloud { width: 22px; height: 18px; margin-right: 19px; }
.sync { width: 22px; height: 22px; margin-right: 20px; }
.lang { width: 33px; text-align: center; margin-right: 20px; }
.wifi { width: 20px; height: 16px; margin-right: 10px; }
.vol { width: 20px; height: 18px; margin-right: 10px; }
.bat { width: 20px; height: 18px; margin-right: 18px; }
.clock { width: 80px; text-align: right; margin-right: 10px; white-space: nowrap; letter-spacing: 0; }
.bell { width: 18px; height: 20px; margin-right: 21px; }
.copilot { width: 30px; height: 30px; }
```
